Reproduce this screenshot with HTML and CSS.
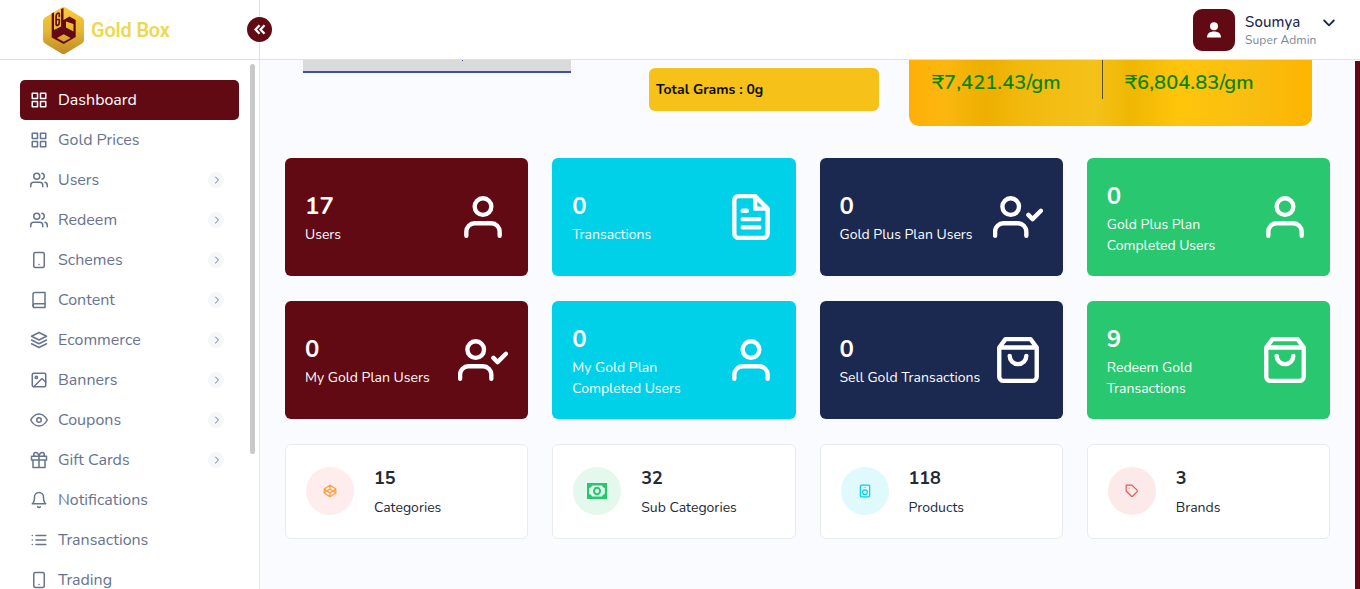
FILE: index.html
```html
<!DOCTYPE html>
<html lang="en">
<head>
<meta charset="utf-8">
<title>Gold Box</title>
<link rel="stylesheet" href="styles.css">
</head>
<body>
<svg class="sprite" aria-hidden="true">
  <symbol id="grid" viewBox="0 0 24 24"><path d="M3 3h7v7H3zM14 3h7v7h-7zM14 14h7v7h-7zM3 14h7v7H3z"/></symbol>
  <symbol id="users" viewBox="0 0 24 24"><path d="M17 21v-2a4 4 0 0 0-4-4H5a4 4 0 0 0-4 4v2"/><circle cx="9" cy="7" r="4"/><path d="M23 21v-2a4 4 0 0 0-3-3.870M16 3.130a4 4 0 0 1 0 7.750"/></symbol>
  <symbol id="tablet" viewBox="0 0 24 24"><rect x="5" y="2" width="14" height="20" rx="2"/><path d="M12 18h.01"/></symbol>
  <symbol id="book" viewBox="0 0 24 24"><path d="M4 19.500A2.500 2.500 0 0 1 6.500 17H20"/><path d="M6.500 2H20v20H6.500A2.500 2.500 0 0 1 4 19.500v-15A2.500 2.500 0 0 1 6.500 2z"/></symbol>
  <symbol id="layers" viewBox="0 0 24 24"><path d="M12 2L2 7l10 5 10-5zM2 17l10 5 10-5M2 12l10 5 10-5"/></symbol>
  <symbol id="image" viewBox="0 0 24 24"><rect x="3" y="3" width="18" height="18" rx="2"/><circle cx="8.500" cy="8.500" r="1.500"/><path d="M21 15l-5-5L5 21"/></symbol>
  <symbol id="eye" viewBox="0 0 24 24"><path d="M1 12s4-8 11-8 11 8 11 8-4 8-11 8-11-8-11-8z"/><circle cx="12" cy="12" r="3"/></symbol>
  <symbol id="gift" viewBox="0 0 24 24"><path d="M20 12v10H4V12M2 7h20v5H2zM12 22V7M12 7H7.500a2.500 2.500 0 0 1 0-5C11 2 12 7 12 7zM12 7h4.500a2.500 2.500 0 0 0 0-5C13 2 12 7 12 7z"/></symbol>
  <symbol id="bell" viewBox="0 0 24 24"><path d="M18 8A6 6 0 0 0 6 8c0 7-3 9-3 9h18s-3-2-3-9M13.730 21a2 2 0 0 1-3.460 0"/></symbol>
  <symbol id="list" viewBox="0 0 24 24"><path d="M8 6h13M8 12h13M8 18h13M3 6h.01M3 12h.01M3 18h.01"/></symbol>
  <symbol id="chevron" viewBox="0 0 24 24"><path d="M9 18l6-6-6-6"/></symbol>
  <symbol id="user" viewBox="0 0 24 24"><path d="M20 21v-2a4 4 0 0 0-4-4H8a4 4 0 0 0-4 4v2"/><circle cx="12" cy="7" r="4"/></symbol>
  <symbol id="user-check" viewBox="0 0 24 24"><path d="M16 21v-2a4 4 0 0 0-4-4H5a4 4 0 0 0-4 4v2"/><circle cx="8.500" cy="7" r="4"/><path d="M17 11l2 2 4-4"/></symbol>
  <symbol id="file" viewBox="0 0 24 24"><path d="M14 2H6a2 2 0 0 0-2 2v16a2 2 0 0 0 2 2h12a2 2 0 0 0 2-2V8zM14 2v6h6M16 13H8M16 17H8M10 9H8"/></symbol>
  <symbol id="bag" viewBox="0 0 24 24"><path d="M6 2L3 6v14a2 2 0 0 0 2 2h14a2 2 0 0 0 2-2V6l-3-4zM3 6h18M16 10a4 4 0 0 1-8 0"/></symbol>
  <symbol id="codepen" viewBox="0 0 24 24"><path d="M12 2l10 6.500v7L12 22 2 15.500v-7zM12 22v-6.500M22 8.500l-10 7-10-7M2 15.500l10-7 10 7M12 2v6.500"/></symbol>
  <symbol id="speaker" viewBox="0 0 24 24"><rect x="4" y="2" width="16" height="20" rx="2"/><circle cx="12" cy="14" r="4"/><path d="M12 6h.01"/></symbol>
  <symbol id="tag" viewBox="0 0 24 24"><path d="M20.590 13.410l-7.170 7.170a2 2 0 0 1-2.830 0L2 12V2h10l8.590 8.590a2 2 0 0 1 0 2.820zM7 7h.01"/></symbol>
</svg>

<header class="topbar">
  <div class="brand">
    <svg class="brand-mark" viewBox="0 0 41 47">
      <defs><linearGradient id="gold" x1="0" y1="0" x2="0" y2="1"><stop offset="0" stop-color="#fcc93a"/><stop offset=".5" stop-color="#e7b735"/><stop offset="1" stop-color="#bd8a26"/></linearGradient></defs>
      <path fill="url(#gold)" d="M18.500.6q2-1 4 0L39 10.500q2 1.200 2 3.500v19q0 2.300-2 3.500l-16.500 9.900q-2 1-4 0L2 36.500Q0 35.300 0 33V14q0-2.300 2-3.500z"/>
      <path fill="#650a14" fill-rule="evenodd" d="M8.700 6.500L11 5.300V23l7-3.600V2l2.500-1v12l6-3.500 6.200 3.500v17l-12 7-12-6.500zM23 14.500l7.500 2.500v7.500L23 20.500zM14 31l6.700 3.700 7-3.700-7-3.800z"/>
      <path fill="none" stroke="#650a14" stroke-width="1.700" d="M16.300 9.500V7.300q0-1.700-1.500-1-1.700.8-1.700 3v7.500q0 2.200 1.600 1.500 1.600-.8 1.600-3v-2.800h-1.600"/>
    </svg>
    <span class="brand-name">Gold Box</span>
    <span class="collapse"><svg viewBox="0 0 12 11"><path d="M5.500 1.200L1.500 5.500l4 4.300M10.500 1.200l-4 4.300 4 4.300"/></svg></span>
  </div>
  <div class="account">
    <span class="avatar"><svg viewBox="0 0 14 16"><circle cx="7" cy="4.300" r="4"/><path d="M0 15.500C0 11.500 2.600 9.500 7 9.500s7 2 7 6z"/></svg></span>
    <div class="who"><span class="who-name">Soumya</span><span class="who-role">Super Admin</span></div>
    <svg class="caret" viewBox="0 0 12 8"><path d="M1.200 1.500L6 6.300l4.800-4.800"/></svg>
  </div>
</header>

<div class="shell">
  <aside class="sidebar">
    <nav class="menu">
      <a class="item active"><svg class="ico"><use href="#grid"/></svg><span>Dashboard</span></a>
      <a class="item"><svg class="ico"><use href="#grid"/></svg><span>Gold Prices</span></a>
      <a class="item"><svg class="ico"><use href="#users"/></svg><span>Users</span><i class="more"><svg><use href="#chevron"/></svg></i></a>
      <a class="item"><svg class="ico"><use href="#users"/></svg><span>Redeem</span><i class="more"><svg><use href="#chevron"/></svg></i></a>
      <a class="item"><svg class="ico"><use href="#tablet"/></svg><span>Schemes</span><i class="more"><svg><use href="#chevron"/></svg></i></a>
      <a class="item"><svg class="ico"><use href="#book"/></svg><span>Content</span><i class="more"><svg><use href="#chevron"/></svg></i></a>
      <a class="item"><svg class="ico"><use href="#layers"/></svg><span>Ecommerce</span><i class="more"><svg><use href="#chevron"/></svg></i></a>
      <a class="item"><svg class="ico"><use href="#image"/></svg><span>Banners</span><i class="more"><svg><use href="#chevron"/></svg></i></a>
      <a class="item"><svg class="ico"><use href="#eye"/></svg><span>Coupons</span><i class="more"><svg><use href="#chevron"/></svg></i></a>
      <a class="item"><svg class="ico"><use href="#gift"/></svg><span>Gift Cards</span><i class="more"><svg><use href="#chevron"/></svg></i></a>
      <a class="item"><svg class="ico"><use href="#bell"/></svg><span>Notifications</span></a>
      <a class="item"><svg class="ico"><use href="#list"/></svg><span>Transactions</span></a>
      <a class="item"><svg class="ico"><use href="#tablet"/></svg><span>Trading</span></a>
    </nav>
    <div class="side-scroll"></div>
  </aside>

  <main class="content">
    <section class="summary">
      <div class="field"><span class="field-mark"></span></div>
      <div class="grams">Total Grams : 0g</div>
      <div class="rates">
        <div class="rate">₹7,421.43/gm</div>
        <div class="rate second">₹6,804.83/gm</div>
      </div>
    </section>

    <section class="stats">
      <div class="stat maroon"><div><b>17</b><p>Users</p></div><svg><use href="#user"/></svg></div>
      <div class="stat cyan"><div><b>0</b><p>Transactions</p></div><svg><use href="#file"/></svg></div>
      <div class="stat navy"><div><b>0</b><p>Gold Plus Plan Users</p></div><svg><use href="#user-check"/></svg></div>
      <div class="stat green"><div><b>0</b><p>Gold Plus Plan<br>Completed Users</p></div><svg><use href="#user"/></svg></div>
      <div class="stat maroon"><div><b>0</b><p>My Gold Plan Users</p></div><svg><use href="#user-check"/></svg></div>
      <div class="stat cyan"><div><b>0</b><p>My Gold Plan<br>Completed Users</p></div><svg><use href="#user"/></svg></div>
      <div class="stat navy"><div><b>0</b><p>Sell Gold Transactions</p></div><svg><use href="#bag"/></svg></div>
      <div class="stat green"><div><b>9</b><p>Redeem Gold<br>Transactions</p></div><svg><use href="#bag"/></svg></div>
    </section>

    <section class="counts">
      <div class="count"><span class="dot peach"><svg><use href="#codepen"/></svg></span><div><b>15</b><p>Categories</p></div></div>
      <div class="count"><span class="dot mint"><svg class="cash" viewBox="0 0 20 16"><path fill-rule="evenodd" d="M0 0h20v16H0zM5 2.500A3 3 0 0 1 2.200 5v6A3 3 0 0 1 5 13.500h10a3 3 0 0 1 2.800-2.500V5A3 3 0 0 1 15 2.500z"/><ellipse cx="10" cy="8" rx="3" ry="3.300"/></svg></span><div><b>32</b><p>Sub Categories</p></div></div>
      <div class="count"><span class="dot aqua"><svg><use href="#speaker"/></svg></span><div><b>118</b><p>Products</p></div></div>
      <div class="count"><span class="dot rose"><svg><use href="#tag"/></svg></span><div><b>3</b><p>Brands</p></div></div>
    </section>
  </main>
  <div class="page-scroll"></div>
</div>
</body>
</html>
```

FILE: styles.css
```css
* { box-sizing: border-box; }
body {
  margin: 0;
  height: 589px;
  overflow: hidden;
  display: flex;
  flex-direction: column;
  background: #fafbfe;
  font-family: Nunito, Lato, "Open Sans", sans-serif;
  color: #212b36;
}
p { margin: 0; }
svg { display: block; fill: none; stroke: currentColor; stroke-width: 2; stroke-linecap: round; stroke-linejoin: round; }
.sprite { position: absolute; width: 0; height: 0; }

.topbar {
  flex: none;
  height: 60px;
  display: flex;
  justify-content: space-between;
  background: #fff;
  border-bottom: 1px solid #e0e0e5;
}
.brand {
  position: relative;
  width: 260px;
  border-right: 1px solid #e0e0e5;
  display: flex;
  align-items: center;
  padding: 1px 0 0 43px;
}
.brand-mark { width: 41px; height: 47px; stroke: none; }
.brand-name { margin-left: 7px; font: 600 20px/24px Roboto, sans-serif; letter-spacing: -.2px; color: #ecd94f; }
.collapse {
  position: absolute;
  right: -13px;
  top: 17px;
  width: 25px;
  height: 25px;
  border-radius: 50%;
  background: #620a13;
  color: #fff;
  display: grid;
  place-items: center;
}
.collapse svg { width: 12px; height: 11px; stroke-width: 2.300; stroke-linecap: butt; stroke-linejoin: miter; }
.account { display: flex; align-items: flex-start; padding: 9px 25px 0 0; }
.avatar {
  width: 42px;
  height: 42px;
  border-radius: 9px;
  background: #620a13;
  display: grid;
  place-items: center;
}
.avatar svg { width: 14px; height: 16px; fill: #fff; stroke: none; }
.who { display: flex; flex-direction: column; width: 78px; margin-left: 10px; padding-top: 4px; }
.who-name { font-size: 15px; line-height: 18px; font-weight: 500; color: #1b2850; letter-spacing: .15px; }
.who-role { font-size: 12px; line-height: 18px; color: #7c8594; letter-spacing: .1px; white-space: nowrap; }
.caret { width: 12px; height: 8px; margin-top: 10px; color: #1b2850; stroke-width: 1.8; }

.shell { flex: 1; min-height: 0; display: flex; }
.sidebar {
  width: 260px;
  background: #fff;
  border-right: 1px solid #e5e6ee;
  display: flex;
  padding: 4px 4px 0 20px;
  overflow: hidden;
}
.menu { width: 219px; padding-top: 16px; }
.item {
  display: flex;
  align-items: center;
  height: 40px;
  padding: 0 15px 0 10px;
  border-radius: 5px;
  color: #67748e;
  font-size: 16px;
  line-height: 18px;
}
.item.active { background: #620a13; color: #fff; }
.ico { width: 18px; height: 18px; margin: -1px 10px 0 0; }
.more {
  margin-left: auto;
  width: 16px;
  height: 16px;
  border-radius: 50%;
  background: #f5f6f9;
  display: grid;
  place-items: center;
}
.more svg { width: 12px; height: 12px; margin: -1px 0 0 1px; }
.side-scroll { width: 5px; height: 390px; margin-left: 11px; background: #c9c9c9; border-radius: 3px; }

.content { flex: 1; padding: 0 25px; overflow: hidden; }
.page-scroll { width: 5px; margin-top: 1px; background: #620a13; }

.summary { display: flex; align-items: flex-start; height: 66px; padding-left: 18px; }
.field { width: 268px; height: 13px; background: #dadada; border-bottom: 2px solid #3c50b0; }
.field-mark { display: block; width: 1px; height: 1px; margin-left: 159px; background: #3c50b0; }
.grams {
  width: 230px;
  height: 43px;
  margin: 8px 30px 0 78px;
  padding-left: 7px;
  border-radius: 6px;
  background: #f6c118;
  color: #0d0d05;
  font-size: 14px;
  font-weight: 700;
  line-height: 43px;
}
.rates {
  width: 403px;
  height: 66px;
  display: flex;
  align-items: flex-start;
  border-radius: 0 0 10px 10px;
  background: linear-gradient(90deg, #ffaf05 0%, #fbb70f 9%, #edaf00 19%, #f2b90d 28%, #f5c21a 46%, #efb702 55%, #ffc50b 67%, #f9bd11 85%, #fdb500 100%);
}
.rate {
  width: 194px;
  height: 39px;
  padding: 9px 0 0 23px;
  border-right: 1px solid #574f35;
  color: #078507;
  font-size: 20px;
  font-weight: 600;
  letter-spacing: .1px;
  line-height: 28px;
}
.rate.second { border: 0; padding-left: 22px; }

.stats { display: grid; grid-template-columns: repeat(4, 1fr); grid-auto-rows: 118px; gap: 25px 24px; margin-top: 32px; }
.stat {
  display: flex;
  align-items: center;
  justify-content: space-between;
  padding: 0 20px;
  border-radius: 6px;
  color: #fff;
}
.stat div { padding-top: 2px; }
.stat b { display: block; font-size: 24px; line-height: 31px; margin-bottom: 2px; }
.stat p { font-size: 14px; line-height: 21px; white-space: nowrap; }
.stat svg { width: 50px; height: 50px; flex: none; stroke-width: 2.1; }
.maroon { background: #620a13; }
.cyan { background: #00d1e8; }
.navy { background: #1b2850; }
.green { background: #29c770; }

.counts { display: grid; grid-template-columns: repeat(4, 1fr); gap: 24px; margin-top: 25px; }
.count {
  height: 95px;
  display: flex;
  align-items: flex-start;
  padding: 22px 20px 0;
  background: #fff;
  border: 1px solid #e8ebed;
  border-radius: 6px;
}
.count b { display: block; font-size: 18px; line-height: 22px; margin-bottom: 8px; }
.count p { font-size: 14px; line-height: 22px; }
.dot { width: 48px; height: 48px; margin-right: 20px; border-radius: 50%; display: grid; place-items: center; }
.dot svg { width: 14px; height: 14px; }
.dot svg.cash { width: 20px; height: 16px; fill: #28c76f; stroke: none; }
.dot .cash ellipse { stroke: #28c76f; fill: none; stroke-width: 2; }
.peach { background: #ffecec; color: #ff9f43; }
.mint { background: #e4f8ed; color: #28c76f; }
.aqua { background: #dff9fd; color: #00cfe8; }
.rose { background: #fce9e9; color: #ea5455; }
```
